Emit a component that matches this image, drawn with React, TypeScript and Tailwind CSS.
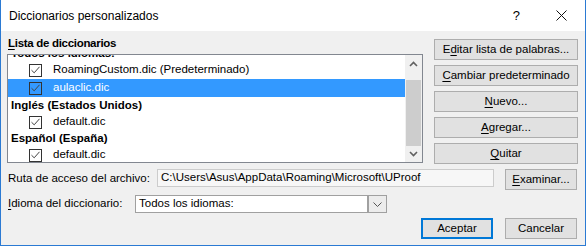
import React from 'react'

const font = { fontFamily: '"Segoe UI", "Liberation Sans", Arial, sans-serif' }

function Check() {
  return (
    <span className="flex h-[13px] w-[13px] shrink-0 items-center justify-center border border-[#333333]">
      <svg width="9" height="8" viewBox="0 0 9 8" fill="none">
        <path d="M0.5 4.2 L3.2 6.8 L8.5 0.8" stroke="#444" strokeWidth="1" />
      </svg>
    </span>
  )
}

function Btn({ children, primary, className = '' }: { children: React.ReactNode; primary?: boolean; className?: string }) {
  return (
    <button
      className={
        'flex h-[21px] items-center justify-center bg-[#e1e1e1] text-[11.5px] leading-none text-black ' +
        (primary ? 'border-2 border-[#0078d7] ' : 'border border-[#adadad] ') +
        className
      }
    >
      {children}
    </button>
  )
}

function Item({ label, selected }: { label: string; selected?: boolean }) {
  return (
    <div
      className={
        'flex items-center pl-[21px] ' +
        (selected ? 'mt-[1px] h-[18px] bg-[#3399ff] text-white' : 'h-[16px]')
      }
    >
      <Check />
      <span className="ml-[11px] text-[11.5px]">{label}</span>
    </div>
  )
}

function Group({ label }: { label: string }) {
  return <div className="flex h-[17px] items-center pl-[3px] text-[11.5px] font-bold">{label}</div>
}

export default function App() {
  return (
    <div style={font} className="flex h-[246px] w-[586px] flex-col overflow-hidden border-x border-b border-[#2b7ad3] bg-[#f0f0f0] text-black">
      {/* title bar */}
      <div className="flex h-[31px] shrink-0 items-center bg-white pl-[8px]">
        <span className="text-[12px]">Diccionarios personalizados</span>
        <span className="ml-auto mr-[36px] text-[13px]">?</span>
        <svg className="mr-[18px]" width="11" height="11" viewBox="0 0 11 11">
          <path d="M0.5 0.5 L10.5 10.5 M10.5 0.5 L0.5 10.5" stroke="#111" strokeWidth="1" />
        </svg>
      </div>

      <div className="flex flex-col px-[6px]">
        <div className="flex">
          {/* list column */}
          <div className="flex w-[416px] flex-col pt-[4px]">
            <div className="ml-[1px] h-[16px] text-[11.5px] font-bold leading-[16px] tracking-[-0.3px]">
              <span className="underline underline-offset-2">L</span>ista de diccionarios
            </div>
            <div className="mt-[3px] flex h-[109px] border border-[#828790] bg-white">
              <div className="flex-1 overflow-hidden">
                <div className="-mt-[10px]">
                  <Group label="Todos los idiomas:" />
                  <Item label="RoamingCustom.dic (Predeterminado)" />
                  <Item label="aulaclic.dic" selected />
                  <Group label="Inglés (Estados Unidos)" />
                  <Item label="default.dic" />
                  <Group label="Español (España)" />
                  <Item label="default.dic" />
                </div>
              </div>
              {/* scrollbar */}
              <div className="flex w-[17px] flex-col bg-[#f0f0f0]">
                <div className="flex h-[17px] items-center justify-center">
                  <svg width="9" height="6" viewBox="0 0 9 6">
                    <path d="M1 5 L4.5 1.5 L8 5" stroke="#606060" strokeWidth="1.6" fill="none" />
                  </svg>
                </div>
                <div className="mx-[1px] mt-[8px] h-[66px] bg-[#cdcdcd]" />
                <div className="flex-1" />
                <div className="flex h-[16px] items-center justify-center">
                  <svg width="9" height="6" viewBox="0 0 9 6">
                    <path d="M1 1 L4.5 4.5 L8 1" stroke="#606060" strokeWidth="1.6" fill="none" />
                  </svg>
                </div>
              </div>
            </div>
          </div>

          {/* right buttons */}
          <div className="ml-[11px] mt-[8px] flex w-[144px] flex-col gap-[5px]">
            <Btn>
              E<span className="underline underline-offset-2">d</span>itar lista de palabras...
            </Btn>
            <Btn>
              <span className="underline underline-offset-2">C</span>ambiar predeterminado
            </Btn>
            <Btn>
              <span className="underline underline-offset-2">N</span>uevo...
            </Btn>
            <Btn>
              <span className="underline underline-offset-2">A</span>gregar...
            </Btn>
            <Btn>
              <span className="underline underline-offset-2">Q</span>uitar
            </Btn>
          </div>
        </div>

        {/* path row */}
        <div className="mt-[5px] flex items-start">
          <span className="ml-[1px] w-[149px] pt-[2px] text-[11.5px] leading-[14px]">Ruta de acceso del archivo:</span>
          <div className="flex h-[18px] w-[337px] items-center border border-[#cccccc] bg-[#f7f7f7] pl-[3px] text-[11.5px]">
            C:\Users\Asus\AppData\Roaming\Microsoft\UProof
          </div>
          <Btn className="ml-[11px] w-[72px]">
            <span className="underline underline-offset-2">E</span>xaminar...
          </Btn>
        </div>

        {/* language row */}
        <div className="mt-[5px] flex items-center">
          <span className="ml-[1px] w-[127px] text-[11.5px]">
            <span className="underline underline-offset-2">I</span>dioma del diccionario:
          </span>
          <div className="flex h-[18px] w-[252px] border border-[#a0a0a0] bg-white">
            <span className="flex flex-1 items-center pl-[3px] text-[11.5px]">Todos los idiomas:</span>
            <span className="flex w-[19px] items-center justify-center border-l-2 border-[#a0a0a0] bg-[#ececec]">
              <svg width="9" height="5" viewBox="0 0 9 5">
                <path d="M0.5 0.5 L4.5 4.5 L8.5 0.5" stroke="#555" strokeWidth="1" fill="none" />
              </svg>
            </span>
          </div>
        </div>

        {/* bottom buttons */}
        <div className="mt-[5px] flex justify-end gap-[12px] pr-[2px]">
          <Btn primary className="w-[72px]">Aceptar</Btn>
          <Btn className="w-[72px]">Cancelar</Btn>
        </div>
      </div>
    </div>
  )
}
